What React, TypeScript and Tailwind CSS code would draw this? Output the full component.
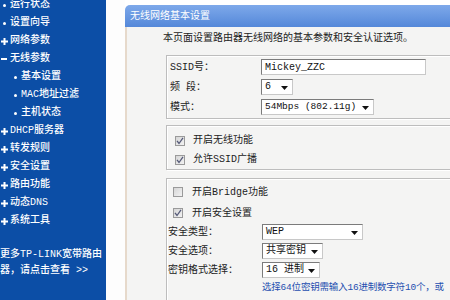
import React from "react";

const Dot = () => <span className="block w-[3px] h-[3px] bg-white rounded-full" />;
const Plus = () => (
  <svg width="7" height="7" viewBox="0 0 7 7" className="block">
    <path d="M2.5 0h2v2.5H7v2H4.5V7h-2V4.5H0v-2h2.5z" fill="white" />
  </svg>
);
const Minus = () => <span className="block w-[6px] h-[2px] bg-white" />;

function NavItem({ icon, label }: { icon: "dot" | "plus" | "minus"; label: string }) {
  return (
    <div className="flex items-center h-[18px]">
      <div className="w-[10px] flex justify-center pr-[2px]">
        {icon === "dot" ? <Dot /> : icon === "plus" ? <Plus /> : <Minus />}
      </div>
      <span>{label}</span>
    </div>
  );
}

function SubItem({ label }: { label: string }) {
  return (
    <div className="flex items-center h-[18px] pl-[14px]">
      <div className="w-[7px]">
        <Dot />
      </div>
      <span>{label}</span>
    </div>
  );
}

function Arrow() {
  return (
    <svg width="7" height="4" viewBox="0 0 7 4" className="absolute right-[4px] top-[6px]">
      <path d="M0 0h7L3.5 4z" fill="#111" />
    </svg>
  );
}

function Select({ className, children }: { className: string; children: React.ReactNode }) {
  return (
    <div
      className={
        "relative h-[16px] border border-[#7b7b7b] border-r-[#c8c8c8] border-b-[#c8c8c8] bg-white flex items-center pl-[3px] text-[#111] " +
        className
      }
    >
      <span className="leading-[14px]">{children}</span>
      <Arrow />
    </div>
  );
}

function Check({ checked }: { checked: boolean }) {
  return (
    <span className="w-[10px] h-[10px] border border-[#9a9a9a] bg-gradient-to-br from-[#d6d6d6] to-[#f2f2f2] flex items-center justify-center">
      {checked && (
        <svg width="8" height="8" viewBox="0 0 8 8">
          <path d="M1 3.8L3 6.5L7 0.8" stroke="#555a78" strokeWidth="1.3" fill="none" />
        </svg>
      )}
    </span>
  );
}

const fieldsetCls =
  "border border-[#bdbdbd] shadow-[inset_1px_1px_0_#ffffff,1px_1px_0_#ffffff] mr-[-40px]";

export default function App() {
  return (
    <div className="w-[450px] h-[300px] overflow-hidden flex bg-white text-[10px] font-[family-name:'Liberation_Mono','Noto_Sans_CJK_SC',monospace]">
      {/* Sidebar */}
      <div className="w-[106px] shrink-0 bg-[#0c4ea6] text-white leading-[12px] font-medium">
        <div className="-mt-[4px]">
          <NavItem icon="dot" label="运行状态" />
          <NavItem icon="dot" label="设置向导" />
          <NavItem icon="plus" label="网络参数" />
          <NavItem icon="minus" label="无线参数" />
          <SubItem label="基本设置" />
          <SubItem label="MAC地址过滤" />
          <SubItem label="主机状态" />
          <NavItem icon="plus" label="DHCP服务器" />
          <NavItem icon="plus" label="转发规则" />
          <NavItem icon="plus" label="安全设置" />
          <NavItem icon="plus" label="路由功能" />
          <NavItem icon="plus" label="动态DNS" />
          <NavItem icon="plus" label="系统工具" />
        </div>
        <div className="mt-[17px] leading-[16px]">
          <div>更多TP-LINK宽带路由</div>
          <div>器，请点击查看 &gt;&gt;</div>
        </div>
      </div>

      {/* gap */}
      <div className="w-[19px] shrink-0 bg-[#fdfdfd]" />

      {/* Panel */}
      <div className="flex-1 flex flex-col pt-[5px] min-w-0">
        <div className="h-[22px] shrink-0 rounded-tl-[5px] bg-gradient-to-b from-[#7ea9ea] to-[#5488d9] text-white flex items-center pl-[5px]">
          无线网络基本设置
        </div>
        <div className="flex-1 border-l-2 border-[#e6d9cb] bg-[#f4f4f3] text-[#222]">
          <div className="pl-[36px] pt-[6px] leading-[12px]">
            本页面设置路由器无线网络的基本参数和安全认证选项。
          </div>

          <div className="pl-[39px] mt-[10px]">
            {/* Fieldset 1 */}
            <div className={fieldsetCls + " pt-[3px] pb-[3px] pl-[3px] flex flex-col gap-[4px]"}>
              <div className="flex items-center h-[16px]">
                <span className="w-[91px]">SSID号：</span>
                <div className="w-[165px] h-[16px] border border-[#7b7b7b] border-r-[#c8c8c8] border-b-[#c8c8c8] bg-white flex items-center pl-[3px] text-[#111]">
                  Mickey_ZZC
                </div>
              </div>
              <div className="flex items-center h-[16px]">
                <span className="w-[91px]">频 段：</span>
                <Select className="w-[32px]">6</Select>
              </div>
              <div className="flex items-center h-[16px]">
                <span className="w-[91px]">模式：</span>
                <Select className="w-[113px] text-[9.5px]">54Mbps (802.11g)</Select>
              </div>
            </div>

            {/* Fieldset 2 */}
            <div className={fieldsetCls + " mt-[6px] pt-[5px] pl-[8px]"}>
              <div className="flex items-center h-[19px] gap-[8px]">
                <Check checked />
                <span>开启无线功能</span>
              </div>
              <div className="flex items-center h-[19px] gap-[8px]">
                <Check checked />
                <span>允许SSID广播</span>
              </div>
            </div>

            {/* Fieldset 3 */}
            <div className={fieldsetCls + " mt-[8px] pt-[4px] pb-[20px] pl-[1px]"}>
              <div className="flex items-center h-[18px] gap-[9px] pl-[5px]">
                <Check checked={false} />
                <span>开启Bridge功能</span>
              </div>
              <div className="flex items-center h-[18px] gap-[9px] pl-[5px] mt-[3px]">
                <Check checked />
                <span>开启安全设置</span>
              </div>
              <div className="flex items-center h-[16px] mt-[2px]">
                <span className="w-[94px]">安全类型：</span>
                <Select className="w-[101px]">WEP</Select>
              </div>
              <div className="flex items-center h-[16px] mt-[3px]">
                <span className="w-[94px]">安全选项：</span>
                <Select className="w-[61px]">共享密钥</Select>
              </div>
              <div className="flex items-center h-[16px] mt-[3px]">
                <span className="w-[94px]">密钥格式选择：</span>
                <Select className="w-[58px]">16 进制</Select>
              </div>
              <div className="flex items-center h-[12px] mt-[4px] pl-[94px] text-[#1f4fb0] text-[9.5px] tracking-[-0.2px] whitespace-nowrap">
                选择64位密钥需输入16进制数字符10个，或
              </div>
            </div>
          </div>
        </div>
      </div>
    </div>
  );
}
